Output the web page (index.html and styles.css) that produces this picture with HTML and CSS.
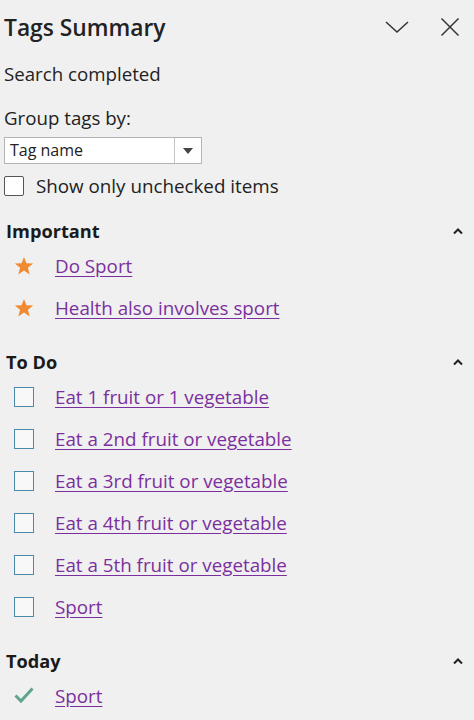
FILE: index.html
```html
<!DOCTYPE html>
<html>
<head>
<meta charset="utf-8">
<link rel="stylesheet" href="styles.css">
</head>
<body>
<div class="pane">
  <div class="header">
    <div class="title">Tags Summary</div>
    <div class="header-icons">
      <svg class="hicon" width="24" height="24" viewBox="0 0 24 24"><path d="M1 7 L12 17 L23 7" fill="none" stroke="#333" stroke-width="1.5"/></svg>
      <svg class="hicon" width="24" height="24" viewBox="0 0 24 24"><path d="M3.5 3.5 L20.5 20.5 M20.5 3.5 L3.5 20.5" fill="none" stroke="#333" stroke-width="1.5"/></svg>
    </div>
  </div>
  <div class="status">Search completed</div>
  <div class="label">Group tags by:</div>
  <div class="select">
    <div class="select-value">Tag name</div>
    <div class="select-btn"><svg width="10" height="6" viewBox="0 0 10 6"><path d="M0 0 L10 0 L5 6 Z" fill="#444"/></svg></div>
  </div>
  <label class="check-row">
    <span class="box"></span>
    <span>Show only unchecked items</span>
  </label>

  <div class="section first">
    <div class="sec-head"><span>Important</span><svg width="12" height="8" viewBox="0 0 12 8"><path d="M2 6.5 L6 2.5 L10 6.5" fill="none" stroke="#222" stroke-width="2"/></svg></div>
    <div class="item"><span class="icon"><svg width="20" height="20" viewBox="0 0 20 20"><path d="M10 1 L12.4 7.3 L19.2 7.6 L13.9 11.8 L15.7 18.4 L10 14.6 L4.3 18.4 L6.1 11.8 L0.8 7.6 L7.6 7.3 Z" fill="#f08a30"/></svg></span><a href="#">Do Sport</a></div>
    <div class="item"><span class="icon"><svg width="20" height="20" viewBox="0 0 20 20"><path d="M10 1 L12.4 7.3 L19.2 7.6 L13.9 11.8 L15.7 18.4 L10 14.6 L4.3 18.4 L6.1 11.8 L0.8 7.6 L7.6 7.3 Z" fill="#f08a30"/></svg></span><a href="#">Health also involves sport</a></div>
  </div>

  <div class="section">
    <div class="sec-head"><span>To Do</span><svg width="12" height="8" viewBox="0 0 12 8"><path d="M2 6.5 L6 2.5 L10 6.5" fill="none" stroke="#222" stroke-width="2"/></svg></div>
    <div class="item"><span class="icon"><span class="tbox"></span></span><a href="#">Eat 1 fruit or 1 vegetable</a></div>
    <div class="item"><span class="icon"><span class="tbox"></span></span><a href="#">Eat a 2nd fruit or vegetable</a></div>
    <div class="item"><span class="icon"><span class="tbox"></span></span><a href="#">Eat a 3rd fruit or vegetable</a></div>
    <div class="item"><span class="icon"><span class="tbox"></span></span><a href="#">Eat a 4th fruit or vegetable</a></div>
    <div class="item"><span class="icon"><span class="tbox"></span></span><a href="#">Eat a 5th fruit or vegetable</a></div>
    <div class="item"><span class="icon"><span class="tbox"></span></span><a href="#">Sport</a></div>
  </div>

  <div class="section">
    <div class="sec-head"><span>Today</span><svg width="12" height="8" viewBox="0 0 12 8"><path d="M2 6.5 L6 2.5 L10 6.5" fill="none" stroke="#222" stroke-width="2"/></svg></div>
    <div class="item"><span class="icon"><svg width="20" height="20" viewBox="0 0 20 20"><path d="M1.5 9.5 L7 15 L18.5 2.5" fill="none" stroke="#5fa58c" stroke-width="3"/></svg></span><a href="#">Sport</a></div>
  </div>
</div>
</body>
</html>
```
FILE: styles.css
```css
html, body {
  margin: 0;
  padding: 0;
  background: #f0f0f0;
}
body {
  font-family: "Open Sans", "Noto Sans", sans-serif;
  color: #222;
  overflow: hidden;
}
.pane {
  width: 474px;
  height: 720px;
}
.header {
  height: 54px;
  display: flex;
  align-items: center;
  justify-content: space-between;
  padding-left: 4px;
  padding-right: 12px;
}
.title {
  font-size: 22.8px;
  font-weight: 600;
}
.header-icons {
  display: flex;
  gap: 29px;
  align-items: center;
}
.status {
  margin-top: 8px;
  padding-left: 4px;
  font-size: 18.7px;
  line-height: 24px;
}
.label {
  margin-top: 20px;
  padding-left: 4px;
  font-size: 18.7px;
  line-height: 24px;
}
.select {
  margin-top: 7px;
  margin-left: 4px;
  width: 198px;
  height: 27px;
  box-sizing: border-box;
  border: 1px solid #b4b4b4;
  background: #fff;
  display: flex;
}
.select-value {
  flex: 1;
  font-size: 16px;
  line-height: 25px;
  padding-left: 5px;
}
.select-btn {
  width: 26px;
  border-left: 1px solid #c4c4c4;
  display: flex;
  align-items: center;
  justify-content: center;
}
.check-row {
  margin-top: 12px;
  padding-left: 4px;
  display: flex;
  align-items: center;
  gap: 12px;
  height: 20px;
  font-size: 18.8px;
}
.box {
  width: 20px;
  height: 20px;
  box-sizing: border-box;
  border: 1px solid #555;
  border-radius: 2px;
  background: #fff;
}
.section {
  margin-top: 19px;
}
.section.first {
  margin-top: 21px;
}
.sec-head {
  height: 28px;
  display: flex;
  align-items: center;
  justify-content: space-between;
  padding-left: 6px;
  padding-right: 10px;
  font-size: 18.2px;
  font-weight: 700;
  color: #1a1a1a;
}
.item {
  height: 42px;
  display: flex;
  align-items: center;
  padding-left: 14px;
}
.icon {
  width: 20px;
  height: 20px;
  margin-right: 21px;
  display: flex;
  align-items: center;
  justify-content: center;
}
.tbox {
  width: 20px;
  height: 20px;
  box-sizing: border-box;
  border: 1.5px solid #4a8aa8;
  background: #f8f8f8;
}
.item a {
  color: #7b2f9e;
  font-size: 18.8px;
  text-decoration: underline;
  text-underline-offset: 3px;
}
```
